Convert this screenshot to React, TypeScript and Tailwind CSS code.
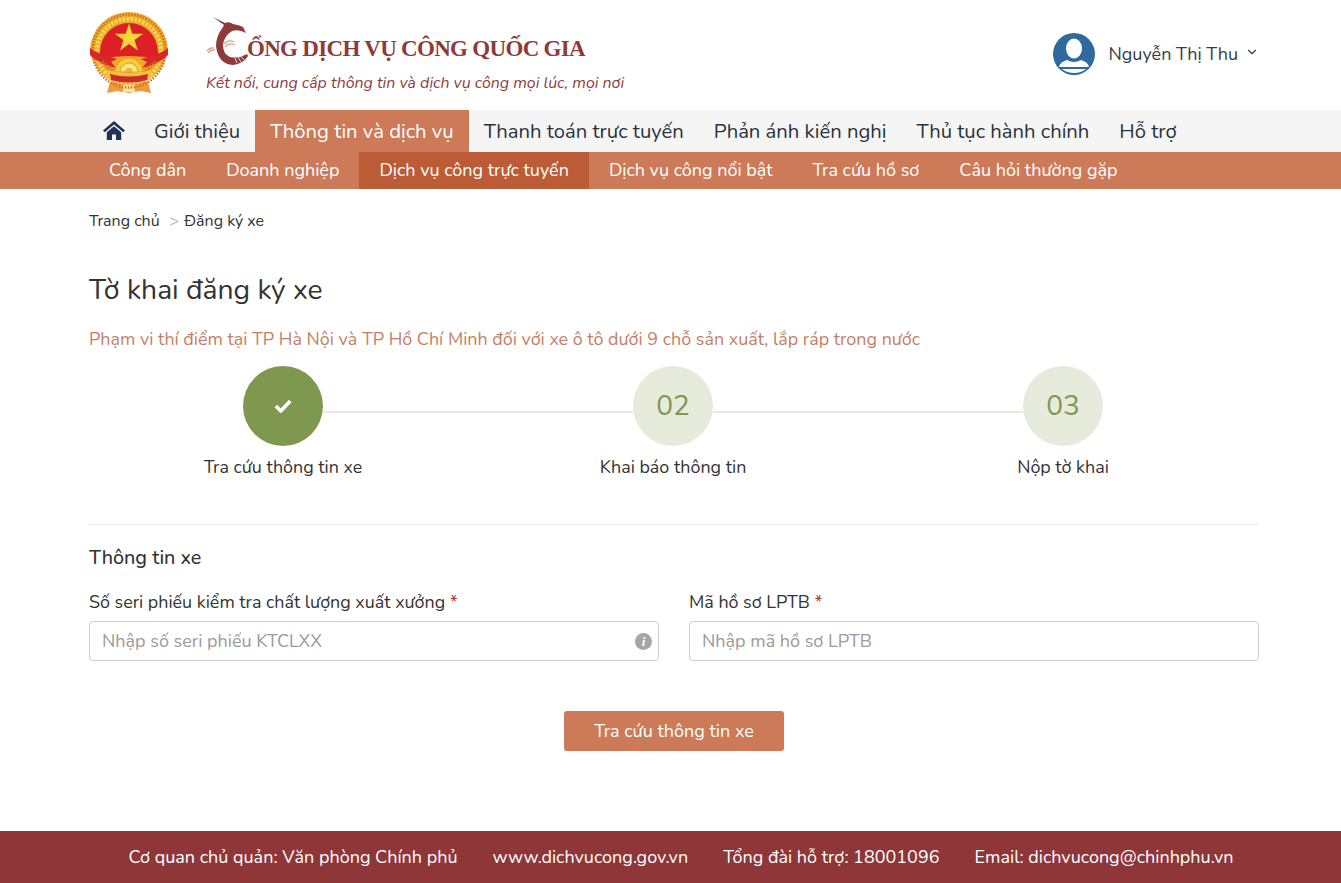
import React from 'react';
import { ChevronDown } from 'lucide-react';

const mainMenu = ['Giới thiệu', 'Thông tin và dịch vụ', 'Thanh toán trực tuyến', 'Phản ánh kiến nghị', 'Thủ tục hành chính', 'Hỗ trợ'];
const subMenu = ['Công dân', 'Doanh nghiệp', 'Dịch vụ công trực tuyến', 'Dịch vụ công nổi bật', 'Tra cứu hồ sơ', 'Câu hỏi thường gặp'];

const Emblem = () => (
  <svg width="80" height="82" viewBox="0 0 80 82" className="shrink-0">
    <path d="M21 70 L59 70 L62 81 L52 79 L40 81 L28 79 L18 81 Z" fill="#ec9a3c" />
    <rect x="34" y="73" width="12" height="7" fill="#fbe3a8" />
    <path d="M40 0 A39 39 0 0 1 79 38 Q76 58 56 70 L24 70 Q4 58 1 38 A39 39 0 0 1 40 0 Z" fill="#eda927" />
    <circle cx="40" cy="39" r="36.500" fill="none" stroke="#c9751d" strokeWidth="2.500" strokeDasharray="1.500 1.500" />
    <circle cx="40" cy="39" r="32" fill="none" stroke="#f8d65a" strokeWidth="4" strokeDasharray="2.500 1.500" />
    <path d="M11 47 L11 40 A29 29 0 0 1 69 40 L69 47 Q54 44 40 44 Q26 44 11 47 Z" fill="#dd1f26" />
    <path d="M40 11.500 L43.400 21.700 L54.200 21.700 L45.500 28.100 L48.800 38.400 L40 32.100 L31.200 38.400 L34.500 28.100 L25.800 21.700 L36.600 21.700 Z" fill="#fbd535" />
    <path d="M1 36 Q8 42 28 47 L22 50 L27 56 Q10 52 1 43 Z" fill="#d9262a" />
    <path d="M79 36 Q72 42 52 47 L58 50 L53 56 Q70 52 79 43 Z" fill="#d9262a" />
    <path d="M13 50 Q22 56 28 66" fill="none" stroke="#c9751d" strokeWidth="4" strokeDasharray="1.500 1.500" />
    <path d="M67 50 Q58 56 52 66" fill="none" stroke="#c9751d" strokeWidth="4" strokeDasharray="1.500 1.500" />
    <path d="M26 60 A14 14 0 0 1 54 60 Z" fill="#f6cc3c" stroke="#ea9a25" strokeWidth="1" />
    <path d="M31 60 A9 9 0 0 1 49 60 Z" fill="#fbe88a" stroke="#ea9a25" strokeWidth="1" />
    <path d="M36 60 A4 4 0 0 1 44 60 Z" fill="#f2b32e" />
    <path d="M18 58 Q40 64 62 58 L63 65 Q40 71 17 65 Z" fill="#f3c13a" />
    <path d="M21 62 Q40 67 59 62 L58 68 Q40 73 22 68 Z" fill="#cc2a2c" />
  </svg>
);

const CraneC = () => (
  <svg width="45" height="52" viewBox="0 0 45 52" className="shrink-0">
    <path d="M8 3 L20 9 Q24 7 28 10 Q34 11 38 13 L41 19 Q34 15 27 17 Q19 22 18 31 Q18 40 25 43 Q33 45 42 40 L43 42 Q38 50 28 51 Q13 50 11 32 Q11 22 18 13 L19 11 Z" fill="#8e3a3b" />
    <path d="M2 37 Q5 33 9 34 M3 39 Q6 35 10 36" fill="none" stroke="#cf9a84" strokeWidth="1.200" />
    <path d="M19 30 Q23 25 29 28 M20 33 Q24 28 30 31" fill="none" stroke="#d9a088" strokeWidth="1.300" />
    <path d="M33 43 L36 48 M36 42 L39 46 M30 44 L32 49" stroke="#fff" strokeWidth="0.800" />
  </svg>
);

const Avatar = () => (
  <svg width="42" height="42" viewBox="0 0 42 42" className="shrink-0">
    <circle cx="21" cy="21" r="21" fill="#2f6a9f" />
    <ellipse cx="21" cy="15.500" rx="8" ry="10" fill="#fff" />
    <path d="M6 34 Q7 29 14 27 Q21 31 28 27 Q35 29 36 34 Z" fill="#fff" />
    <path d="M9 36 L33 36 Q28 40 21 40 Q14 40 9 36 Z" fill="#fff" />
  </svg>
);

const HomeIcon = () => (
  <svg width="22" height="19" viewBox="0 0 22 19">
    <path d="M11 0 L22 9.500 L20.300 11.300 L11 3.400 L1.700 11.300 L0 9.500 Z" fill="#1f3354" />
    <path d="M3.800 11.200 L11 5.200 L18.200 11.200 L18.200 19 L13 19 L13 13.500 L9 13.500 L9 19 L3.800 19 Z" fill="#1f3354" />
  </svg>
);

const StepCircle = ({ done, num }: { done?: boolean; num?: string }) => (
  <div className={`w-20 h-20 shrink-0 rounded-full flex items-center justify-center text-[28px] text-[#7f9850] ${done ? 'bg-[#7f9850]' : 'bg-[#e6ebdc]'}`}>
    {done ? (
      <svg width="18" height="14" viewBox="0 0 18 14">
        <path d="M1.800 7 L6.800 12 L16.200 2" fill="none" stroke="#fff" strokeWidth="3.600" strokeLinejoin="round" />
      </svg>
    ) : num}
  </div>
);

const steps = [
  { label: 'Tra cứu thông tin xe', done: true },
  { label: 'Khai báo thông tin', num: '02' },
  { label: 'Nộp tờ khai', num: '03' },
];

const App: React.FC = () => {
  return (
    <div className="w-[1341px] h-[883px] bg-white flex flex-col overflow-hidden text-[#333] font-['Nunito','Lato','Noto_Sans',sans-serif]">
      <header className="h-[110px] pl-[89px] pr-[82px] flex items-start">
        <div className="mt-[12px]"><Emblem /></div>
        <div className="ml-[36px] mt-[14px] flex-1">
          <div className="flex items-end h-[52px]">
            <CraneC />
            <span className="font-['Liberation_Serif',serif] font-bold text-[23px] tracking-[-0.7px] leading-[28px] text-[#8e3a3b] -ml-[3px] mb-[3px]">ỔNG DỊCH VỤ CÔNG QUỐC GIA</span>
          </div>
          <p className="ml-[1px] italic text-[15.900px] leading-[20px] text-[#8e3a3b] mt-[7px]">Kết nối, cung cấp thông tin và dịch vụ công mọi lúc, mọi nơi</p>
        </div>
        <div className="flex items-center mt-[33px]">
          <Avatar />
          <span className="ml-[14px] text-[18px] text-[#333d47]">Nguyễn Thị Thu</span>
          <ChevronDown size={14} className="ml-[7px] mb-[4px] text-[#333d47]" />
        </div>
      </header>

      <nav className="h-[42px] bg-[#f5f5f5] pl-[103px] flex items-stretch text-[20.250px] text-[#2a3340]">
        <div className="flex items-center w-[36px] pb-[2px]"><HomeIcon /></div>
        {mainMenu.map((m, i) => (
          <div key={m} className={`px-[15px] pt-[2px] flex items-center ${i === 1 ? 'bg-[#cc7a58] text-white' : ''}`}>{m}</div>
        ))}
      </nav>
      <nav className="h-[37px] bg-[#cc7a58] pl-[89px] flex items-stretch text-[18px] text-white">
        {subMenu.map((m, i) => (
          <div key={m} className={`px-[20px] flex items-center ${i === 2 ? 'bg-[#bb5c36]' : ''}`}>{m}</div>
        ))}
      </nav>

      <main className="flex-1 pl-[89px] pr-[82px]">
        <div className="mt-[22px] flex items-center text-[16px] leading-[20px] text-[#333]">
          Trang chủ <span className="ml-[10px] mr-[5px] text-[#b5b5b5]">&gt;</span> Đăng ký xe
        </div>
        <h1 className="mt-[41px] text-[28.300px] leading-[36px] text-[#333]">Tờ khai đăng ký xe</h1>
        <p className="mt-[19px] text-[17.930px] leading-[24px] text-[#c47f66]">Phạm vi thí điểm tại TP Hà Nội và TP Hồ Chí Minh đối với xe ô tô dưới 9 chỗ sản xuất, lắp ráp trong nước</p>

        <div className="mt-[15px] -ml-[1px] grid grid-cols-3 w-[1170px]">
          {steps.map((s, i) => (
            <div key={s.label} className="flex flex-col items-center">
              <div className="w-full flex items-center">
                <div className={`flex-1 h-[2px] mt-[11px] ${i === 0 ? '' : 'bg-[#e6ebdc]'}`} />
                <StepCircle done={s.done} num={s.num} />
                <div className={`flex-1 h-[2px] mt-[11px] ${i === 2 ? '' : 'bg-[#e6ebdc]'}`} />
              </div>
              <div className="mt-[9px] text-[17.900px] leading-[24px] text-[#333]">{s.label}</div>
            </div>
          ))}
        </div>

        <div className="mt-[45px] border-t border-[#eeeeee] w-[1170px]">
          <h2 className="mt-[21px] text-[19.800px] leading-[24px] font-medium text-[#333]">Thông tin xe</h2>
          <div className="mt-[20px] grid grid-cols-2 gap-[30px]">
            <div>
              <label className="block text-[17.900px] leading-[24px] text-[#333]">Số seri phiếu kiểm tra chất lượng xuất xưởng <span className="text-[#a93b3b]">*</span></label>
              <div className="mt-[7px] h-[40px] border border-[#cfcfcf] rounded-[4px] pl-[12px] pr-[6px] flex items-center justify-between">
                <span className="text-[18px] text-[#9a9a9a]">Nhập số seri phiếu KTCLXX</span>
                <span className="w-[17px] h-[17px] rounded-full bg-[#a6a6a6] text-white text-[13px] leading-[17px] font-bold italic text-center font-['Liberation_Serif',serif]">i</span>
              </div>
            </div>
            <div>
              <label className="block text-[17.900px] leading-[24px] text-[#333]">Mã hồ sơ LPTB <span className="text-[#a93b3b]">*</span></label>
              <div className="mt-[7px] h-[40px] border border-[#cfcfcf] rounded-[4px] px-[12px] flex items-center">
                <span className="text-[18px] text-[#9a9a9a]">Nhập mã hồ sơ LPTB</span>
              </div>
            </div>
          </div>
          <div className="mt-[50px] flex justify-center">
            <button className="w-[220px] h-[40px] rounded-[3px] bg-[#cc7a58] text-white text-[18px]">Tra cứu thông tin xe</button>
          </div>
        </div>
      </main>

      <footer className="h-[52px] bg-[#8e3638] text-white text-[18px] flex items-center justify-center gap-[35px] pl-[21px]">
        <span>Cơ quan chủ quản: Văn phòng Chính phủ</span>
        <span>www.dichvucong.gov.vn</span>
        <span>Tổng đài hỗ trợ: 18001096</span>
        <span>Email: dichvucong@chinhphu.vn</span>
      </footer>
    </div>
  );
};

export default App;
